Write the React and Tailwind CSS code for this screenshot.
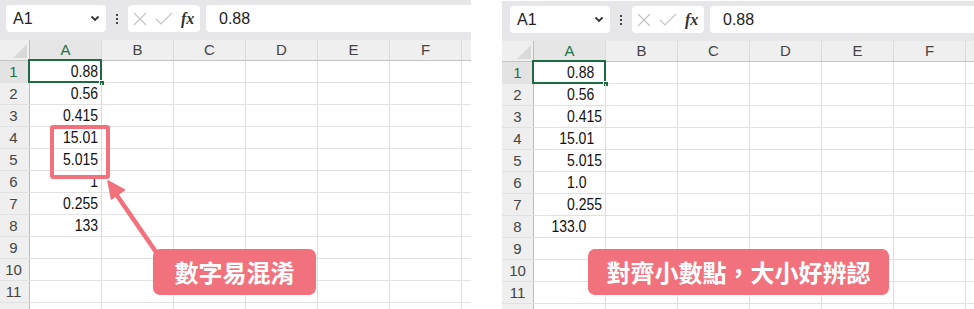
import React from "react";

const cols = ["A", "B", "C", "D", "E", "F"];

// left: raw general format, right: decimals padded with invisible digits
const leftVals = [
  { t: "0.88", pad: 0 },
  { t: "0.56", pad: 0 },
  { t: "0.415", pad: 0 },
  { t: "15.01", pad: 0 },
  { t: "5.015", pad: 0 },
  { t: "1", pad: 0 },
  { t: "0.255", pad: 0 },
  { t: "133", pad: 0 },
];
const rightVals = [
  { t: "0.88", pad: 1 },
  { t: "0.56", pad: 1 },
  { t: "0.415", pad: 0 },
  { t: "15.01", pad: 1 },
  { t: "5.015", pad: 0 },
  { t: "1.0", pad: 2 },
  { t: "0.255", pad: 0 },
  { t: "133.0", pad: 2 },
];

function Toolbar() {
  return (
    <div className="h-[40px] bg-[#e7e7e9] flex items-start pt-[5px] pl-[8px]">
      <div className="w-[100px] h-[27px] bg-white rounded-[4px] flex items-center justify-between pl-[7px] pr-[6px]">
        <span className="text-[16px] text-[#222]">A1</span>
        <svg width="10" height="7" viewBox="0 0 10 7">
          <path d="M1.5 1.5 L5 5 L8.5 1.5" fill="none" stroke="#333" strokeWidth="1.8" />
        </svg>
      </div>
      <div className="w-[22px] h-[27px] flex flex-col items-center justify-center gap-[2px]">
        <span className="w-[2px] h-[2px] bg-[#444]" />
        <span className="w-[2px] h-[2px] bg-[#444]" />
        <span className="w-[2px] h-[2px] bg-[#444]" />
      </div>
      <div className="w-[72px] h-[27px] bg-white rounded-[4px] flex items-center pl-[5px]">
        <svg width="14" height="14" viewBox="0 0 14 14">
          <path d="M1 1 L13 13 M13 1 L1 13" stroke="#c4c4c4" strokeWidth="1.2" />
        </svg>
        <svg width="18" height="14" viewBox="0 0 18 14" className="ml-[8px]">
          <path d="M1 7 L6 12 L17 1" fill="none" stroke="#c4c4c4" strokeWidth="1.2" />
        </svg>
        <span className="ml-[8px] text-[16px] italic font-bold text-[#333] font-['Liberation_Serif',serif]">fx</span>
      </div>
      <div className="flex-1 ml-[6px] h-[27px] bg-white rounded-l-[4px] flex items-center pl-[13px]">
        <span className="text-[16px] text-[#222]">0.88</span>
      </div>
    </div>
  );
}

function Sheet({ values }) {
  const rows = Array.from({ length: 12 }, (_, i) => i + 1);
  return (
    <div className="w-[473px] shrink-0">
      <Toolbar />
      <div className="flex h-[21px] bg-[#efefef] border-b border-[#c4c4c4] text-[15px] leading-[20px] text-[#444]">
        <div className="w-[32px] border-r border-[#bdbdbd] relative">
          <svg className="absolute right-[2px] bottom-[2px]" width="14" height="14" viewBox="0 0 14 14">
            <path d="M14 0 L14 14 L0 14 Z" fill="#d9d9d9" />
          </svg>
        </div>
        {cols.map((c) => (
          <div
            key={c}
            className={
              "w-[72px] border-r border-[#dadada] text-center " +
              (c === "A" ? "text-[#1e7145] bg-[#e6e6e6]" : "")
            }
          >
            {c}
          </div>
        ))}
        <div className="flex-1" />
      </div>
      {rows.map((r) => {
        const v = values[r - 1];
        return (
          <div key={r} className="flex h-[22px] border-b border-[#e1e1e1]">
            <div
              className={
                "w-[32px] border-r border-[#bdbdbd] text-center text-[15px] leading-[22px] " +
                (r === 1 ? "bg-[#e3e3e3] text-[#1e7145]" : "bg-[#efefef] text-[#444]")
              }
            >
              {r < 12 ? r : ""}
            </div>
            <div className="w-[72px] border-r border-[#dcdcdc] relative text-right pr-[3px] text-[14px] leading-[21px] text-[#111]">
              {v && (
                <span className="inline-block scale-y-[1.15]">
                  {v.t}
                  {v.pad > 0 && <span className="invisible">{"0".repeat(v.pad)}</span>}
                </span>
              )}
              {r === 1 && (
                <>
                  <div className="absolute -left-[2px] -top-[2px] w-[74px] h-[24px] border-2 border-[#1e6b41]" />
                  <div className="absolute -right-[4px] bottom-[-4px] w-[6px] h-[6px] bg-[#1e6b41] border border-white" />
                </>
              )}
            </div>
            {cols.slice(1).map((c) => (
              <div key={c} className="w-[72px] border-r border-[#dcdcdc]" />
            ))}
            <div className="flex-1" />
          </div>
        );
      })}
    </div>
  );
}

export default function App() {
  return (
    <div className="relative w-[974px] h-[309px] bg-white overflow-hidden flex font-['Liberation_Sans',sans-serif]">
      <div className="w-[471px] shrink-0 overflow-hidden">
        <div className="-ml-[2px]">
          <Sheet values={leftVals} />
        </div>
      </div>
      <div className="w-[31px] shrink-0" />
      <div className="w-[472px] shrink-0 overflow-hidden pt-[1px]">
        <Sheet values={rightVals} />
      </div>

      {/* annotations */}
      <div className="absolute left-[50px] top-[125px] w-[60px] h-[54px] border-4 border-[#f1717c] rounded-[3px]" />
      <svg className="absolute left-0 top-0" width="974" height="309" viewBox="0 0 974 309">
        <path d="M156 252 L116 194" stroke="#f1717c" strokeWidth="4.5" strokeLinecap="round" />
        <path d="M108 181 L124.5 190 L111.5 199 Z" fill="#f1717c" stroke="#f1717c" strokeWidth="1.5" strokeLinejoin="round" />
      </svg>
      <div className="absolute left-[153px] top-[249px] w-[163px] h-[46px] rounded-[7px] bg-[#f1717c] flex items-center justify-center text-white text-[24px] font-bold font-['Noto_Sans_CJK_TC','Noto_Sans_CJK_SC',sans-serif]">
        數字易混淆
      </div>
      <div className="absolute left-[588px] top-[249px] w-[301px] h-[46px] rounded-[7px] bg-[#f1717c] flex items-center justify-center text-white text-[24px] font-bold font-['Noto_Sans_CJK_TC','Noto_Sans_CJK_SC',sans-serif]">
        對齊小數點，大小好辨認
      </div>
    </div>
  );
}
